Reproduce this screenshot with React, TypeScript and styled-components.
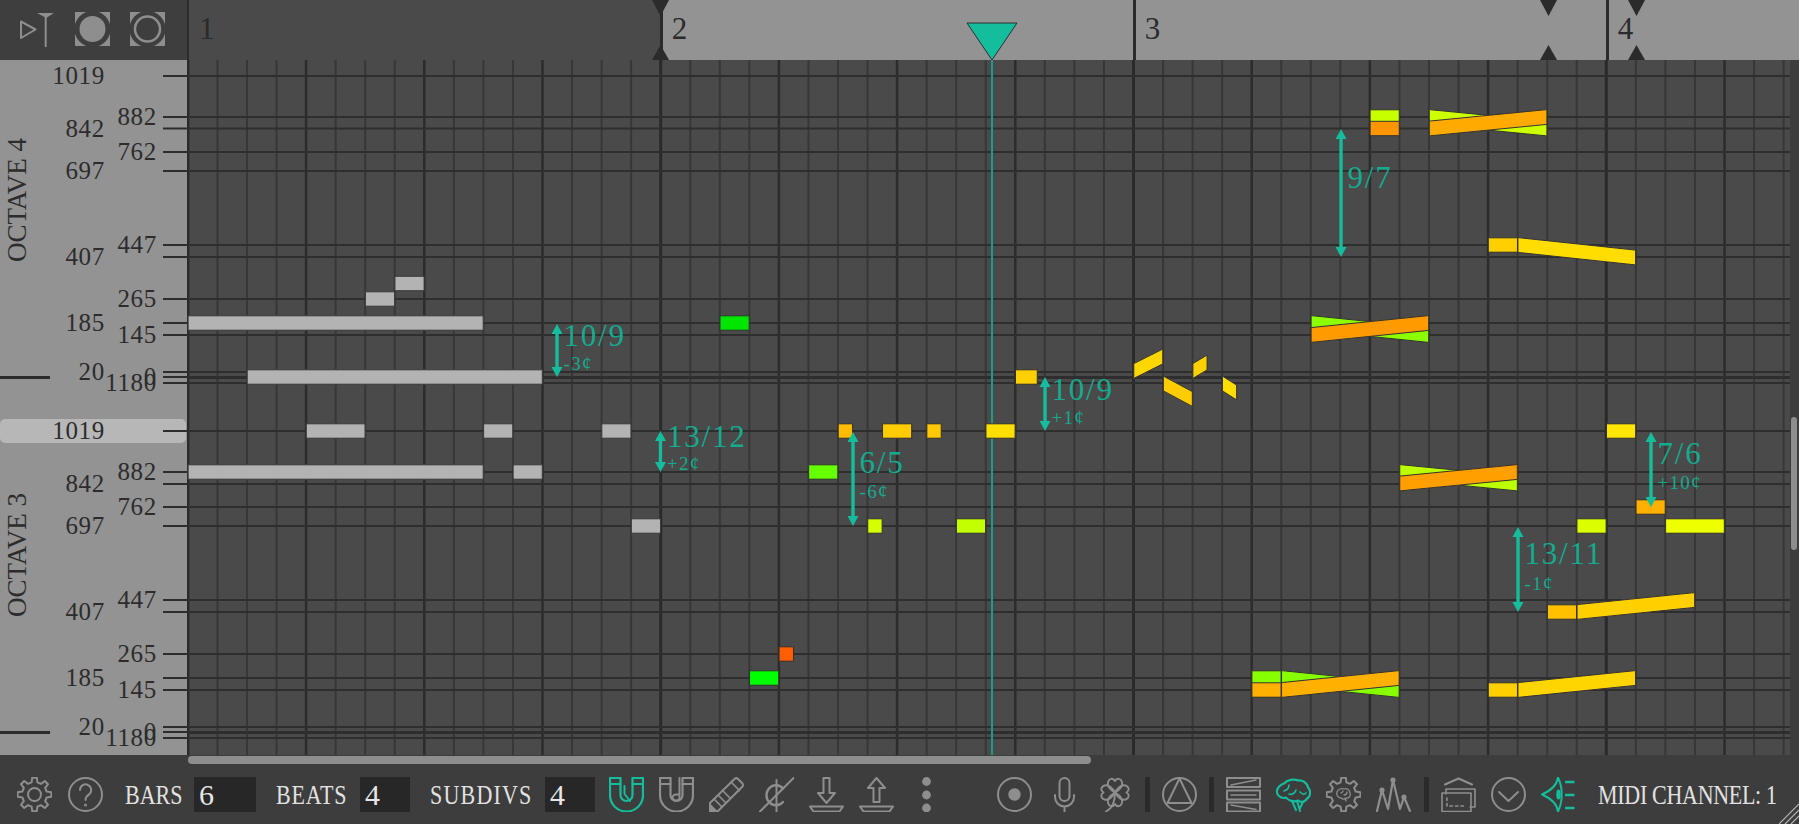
import React from "react";
import styled, { createGlobalStyle } from "styled-components";

const SERIF = `"Liberation Serif", "DejaVu Serif", serif`;
const GRAY = "#8e8e8e";
const TEAL = "#14bd9b";
const TEALTEXT = "#15ab8f";

const Global = createGlobalStyle`
  html, body { margin: 0; padding: 0; background: #3d3d3d; overflow: hidden; }
  * { box-sizing: border-box; }
`;

const Root = styled.div`
  width: 1799px;
  height: 824px;
  display: grid;
  grid-template-columns: 187px 1603px 9px;
  grid-template-rows: 60px 695px 69px;
  background: #3d3d3d;
  font-family: ${SERIF};
  overflow: hidden;
  position: relative;
`;

const Corner = styled.div`
  background: #3e3e3e;
  display: flex;
  align-items: flex-start;
  padding: 12px 0 0 20px;
  gap: 3px;
`;
const CornerGlyph = styled.svg<{ $ml?: number }>`
  width: ${(p) => (p.$ml ? 35 : 34)}px;
  height: 35px;
  margin-left: ${(p) => p.$ml ?? 0}px;
  flex: none;
`;

const Ruler = styled.div`
  position: relative;
  display: flex;
  background: #939393;
`;
const BarCell = styled.div<{ $dim?: boolean; $first?: boolean }>`
  flex: ${(p) => (p.$first ? "0 0 472.7px" : "0 0 473px")};
  height: 60px;
  background: ${(p) => (p.$dim ? "#4a4a4a" : "#939393")};
  border-left: ${(p) => (p.$first ? 2 : 3)}px solid #2b2b2b;
  padding: 14px 0 0 ${(p) => (p.$first ? 10 : 9)}px;
  color: #2b2b2b;
  font-size: 31px;
  line-height: 30px;
`;
const Marker = styled.svg`
  position: absolute;
  width: 17px;
  height: 60px;
  top: 0;
`;
const PlayHead = styled.svg`
  position: absolute;
  left: 779px;
  top: 22px;
  width: 52px;
  height: 39px;
`;

const ScrollColumn = styled.div`
  grid-column: 3;
  grid-row: 1 / 3;
  background: #3d3d3d;
  padding: 417px 2px 0 1px;
`;
const VThumb = styled.div`
  width: 6px;
  height: 133px;
  border-radius: 3px;
  background: #8e8e8e;
`;

const Side = styled.div`
  position: relative;
  background: #939393;
  overflow: hidden;
`;
const SideTicks = styled.svg`
  position: absolute;
  inset: 0;
  width: 187px;
  height: 695px;
`;
const HighlightRow = styled.div`
  position: absolute;
  left: 0;
  right: 1px;
  top: 359px;
  height: 24px;
  background: #b7b7b7;
  border-radius: 5px;
`;
const PitchLabel = styled.div.attrs<{ $y: number; $col: number }>((p) => ({
  style: { top: p.$y - 61 },
}))<{ $y: number; $col: number }>`
  position: absolute;
  right: ${(p) => (p.$col === 0 ? 82 : 30)}px;
  transform: translateY(-50%);
  font-size: 25px;
  letter-spacing: 0.7px;
  line-height: 25px;
  color: #2c2c2c;
`;
const OctaveLabel = styled.div.attrs<{ $y: number }>((p) => ({
  style: { top: p.$y - 60 },
}))<{ $y: number }>`
  position: absolute;
  left: 4px;
  writing-mode: vertical-rl;
  transform: rotate(180deg) translateY(50%);
  font-size: 27px;
  line-height: 27px;
  color: #2c2c2c;
  white-space: nowrap;
`;

const Roll = styled.div`
  position: relative;
  background: #4a4a4a;
  overflow: hidden;
`;
const RollCanvas = styled.svg`
  position: absolute;
  inset: 0;
  width: 1603px;
  height: 695px;
`;
const Ratio = styled.div.attrs<{ $x: number; $y: number; $small?: boolean }>((p) => ({
  style: { left: p.$x - 187, top: p.$y - 60 },
}))<{ $x: number; $y: number; $small?: boolean }>`
  position: absolute;
  transform: translateY(-50%);
  color: ${TEALTEXT};
  font-size: ${(p) => (p.$small ? 19 : 31)}px;
  letter-spacing: ${(p) => (p.$small ? 1.3 : 1.8)}px;
  line-height: 1;
  white-space: nowrap;
`;

const Bottom = styled.div`
  grid-column: 1 / 4;
  position: relative;
  background: #3d3d3d;
  display: flex;
  flex-direction: column;
`;
const HTrack = styled.div`
  height: 22px;
  padding: 1px 0 0 188px;
`;
const HThumb = styled.div`
  width: 903px;
  height: 8px;
  border-radius: 4px;
  background: #8e8e8e;
`;
const Toolbar = styled.div`
  display: flex;
  align-items: center;
  height: 35px;
  padding-left: 17px;
`;
const Glyph = styled.svg<{ $ml?: number; $w?: number; $on?: boolean }>`
  flex: none;
  width: ${(p) => p.$w ?? 35}px;
  height: 35px;
  margin-left: ${(p) => p.$ml ?? 0}px;
  color: ${(p) => (p.$on ? TEAL : GRAY)};
  fill: none;
  stroke: currentColor;
  stroke-width: 2;
  stroke-linejoin: round;
  stroke-linecap: round;
`;
const Sep = styled.div<{ $ml: number }>`
  flex: none;
  width: 5px;
  height: 35px;
  margin-left: ${(p) => p.$ml}px;
  background: #2a2a2a;
`;
const FieldLabel = styled.span<{ $w: number; $ml: number; $sp?: number }>`
  flex: none;
  display: inline-block;
  width: ${(p) => p.$w}px;
  margin-left: ${(p) => p.$ml}px;
  color: #e2e2e2;
  font-size: 22px;
  line-height: 35px;
  letter-spacing: ${(p) => p.$sp ?? 0}px;
  white-space: nowrap;
  transform: scaleY(1.28);
`;
const FieldInput = styled.input<{ $w: number; $pl?: number }>`
  flex: none;
  width: ${(p) => p.$w}px;
  height: 35px;
  margin-left: 12px;
  padding: 0 0 0 ${(p) => p.$pl ?? 5}px;
  border: 0;
  outline: 0;
  background: #272727;
  color: #e6e6e6;
  font-family: ${SERIF};
  font-size: 30px;
`;
const Hatch = styled.svg`
  position: absolute;
  right: 0;
  bottom: 0;
  width: 20px;
  height: 21px;
`;

const sub = 29.55;
const x0 = 187.9;
const X = (i: number) => x0 + sub * i;

const octave = [
  { c: 1019, y: 76, col: 0 },
  { c: 882, y: 117, col: 1 },
  { c: 842, y: 128.5, col: 0 },
  { c: 762, y: 152, col: 1 },
  { c: 697, y: 171, col: 0 },
  { c: 447, y: 245, col: 1 },
  { c: 407, y: 257, col: 0 },
  { c: 265, y: 299, col: 1 },
  { c: 185, y: 323, col: 0 },
  { c: 145, y: 335, col: 1 },
  { c: 20, y: 372, col: 0 },
  { c: 0, y: 377, col: 1 },
  { c: 1180, y: 383, col: 1 },
];
const rows = [...octave, ...octave.map((o) => ({ ...o, y: Math.round(o.y + 355) }))];

const GRAYNOTE = "#b3b3b3";
type N = [number, number, number, string];
const notes: N[] = [
  [0, 10, 472, GRAYNOTE],
  [11, 1, 472, GRAYNOTE],
  [4, 2, 431, GRAYNOTE],
  [10, 1, 431, GRAYNOTE],
  [14, 1, 431, GRAYNOTE],
  [15, 1, 526, GRAYNOTE],
  [2, 10, 377, GRAYNOTE],
  [0, 10, 323, GRAYNOTE],
  [6, 1, 299, GRAYNOTE],
  [7, 1, 283.5, GRAYNOTE],
  [18, 1, 323, "#00e600"],
  [22, 0.5, 431, "#ffbb00"],
  [23.5, 1, 431, "#ffcc00"],
  [25, 0.5, 431, "#ffc800"],
  [27, 1, 431, "#ffdf00"],
  [21, 1, 472, "#66ff00"],
  [23, 0.5, 526, "#d4ff00"],
  [26, 1, 526, "#c4ff00"],
  [20, 0.5, 654, "#ff5f00"],
  [19, 1, 678, "#00ff00"],
  [40, 1, 117, "#c8ff00"],
  [40, 1, 128.5, "#ff9500"],
  [44, 1, 245, "#ffd000"],
  [48, 1, 431, "#ffe600"],
  [49, 1, 507, "#ffb000"],
  [47, 1, 526, "#dcff00"],
  [50, 2, 526, "#eeff00"],
  [46, 1, 612, "#ffc000"],
  [44, 1, 690, "#ffd000"],
  [36, 1, 678, "#88ff00"],
  [36, 1, 690, "#ffb000"],
  [28, 0.75, 377, "#ffcf00"],
];

type S = [number, number, number, number, string];
const slides: S[] = [
  [42, 46, 117, 128.5, "#ccff00"],
  [42, 46, 128.5, 117, "#ffaa00"],
  [45, 49, 245, 257.5, "#ffdd00"],
  [38, 42, 323, 335, "#8cff00"],
  [38, 42, 335, 323, "#ff9a00"],
  [32, 33, 371, 356.5, "#ffd700"],
  [33, 34, 383.5, 399, "#ffcc00"],
  [34, 34.5, 371, 362.5, "#ffd000"],
  [35, 35.5, 383.5, 392.5, "#ffdd00"],
  [37, 41, 678, 690, "#88ff00"],
  [37, 41, 690, 678, "#ffb000"],
  [41, 45, 472, 483.5, "#bbff00"],
  [41, 45, 483.5, 472, "#ff9f00"],
  [47, 51, 612, 600, "#ffd000"],
  [45, 49, 690, 678, "#ffd500"],
];

type A = { x: number; y1: number; y2: number; big: string; by: number; small?: string; sy?: number };
const arrows: A[] = [
  { x: 557, y1: 324, y2: 377, big: "10/9", by: 335, small: "-3¢", sy: 363 },
  { x: 660.5, y1: 431, y2: 472, big: "13/12", by: 436, small: "+2¢", sy: 463 },
  { x: 853, y1: 432, y2: 526, big: "6/5", by: 462, small: "-6¢", sy: 491 },
  { x: 1045, y1: 377, y2: 431, big: "10/9", by: 389, small: "+1¢", sy: 417 },
  { x: 1341, y1: 129, y2: 257, big: "9/7", by: 177 },
  { x: 1651, y1: 432, y2: 507, big: "7/6", by: 453, small: "+10¢", sy: 482 },
  { x: 1518, y1: 527, y2: 612, big: "13/11", by: 553, small: "-1¢", sy: 583 },
];

function gearPath(cx: number, cy: number, ro: number, ri: number, teeth: number) {
  const pts: string[] = [];
  const step = (Math.PI * 2) / teeth;
  for (let t = 0; t < teeth; t++) {
    const a = t * step - Math.PI / 2;
    const w1 = step * 0.17;
    const w2 = step * 0.3;
    const p = (r: number, an: number) => `${(cx + r * Math.cos(an)).toFixed(2)} ${(cy + r * Math.sin(an)).toFixed(2)}`;
    pts.push(p(ri, a - w2), p(ro, a - w1), p(ro, a + w1), p(ri, a + w2));
  }
  return "M" + pts.join("L") + "Z";
}

const LEAF = "M0 0 C-5 -3,-8 -7,-7 -10.5 C-6 -14,-2 -15,0 -11.5 C2 -15,6 -14,7 -10.5 C8 -7,5 -3,0 0 Z";

const App = () => {
  const verticals: number[] = [];
  for (let i = 0; i <= 54; i++) verticals.push(i);
  return (
    <Root>
      <Global />
      <Corner>
        <CornerGlyph viewBox="0 0 34 35">
          <path d="M1 9.5 L15.5 17.5 L1 26 Z" fill="none" stroke={GRAY} strokeWidth="2" strokeLinejoin="round" />
          <path d="M17 1 H34 L26.2 6 Z" fill={GRAY} />
          <line x1="25.7" y1="2" x2="25.7" y2="35" stroke={GRAY} strokeWidth="2" />
        </CornerGlyph>
        <CornerGlyph $ml={18} viewBox="0 0 35 35">
          <rect x="0" y="0" width="35" height="34" fill={GRAY} />
          <circle cx="17.5" cy="17" r="18" fill="#3e3e3e" />
          <circle cx="17.5" cy="17" r="13" fill={GRAY} />
        </CornerGlyph>
        <CornerGlyph $ml={17} viewBox="0 0 35 35">
          <rect x="0" y="0" width="35" height="34" fill={GRAY} />
          <circle cx="17.5" cy="17" r="18" fill="#3e3e3e" />
          <circle cx="17.5" cy="17" r="12.5" fill="none" stroke={GRAY} strokeWidth="2.5" />
        </CornerGlyph>
      </Corner>

      <Ruler>
        <BarCell $dim $first>1</BarCell>
        <BarCell>2</BarCell>
        <BarCell>3</BarCell>
        <BarCell>4</BarCell>
        {[473.5, 1361.2, 1449.5].map((l) => (
          <Marker key={l} viewBox="0 0 17 60" style={{ left: l - 8.5 }}>
            <path d="M0 0 H17 L8.5 16 Z" fill="#2b2b2b" />
            <path d="M0 60 H17 L8.5 45 Z" fill="#2b2b2b" />
          </Marker>
        ))}
        <PlayHead viewBox="0 0 52 39">
          <path d="M1 1 H51 L26 38 Z" fill={TEAL} stroke="#2f2f2f" strokeWidth="1" strokeLinejoin="round" />
        </PlayHead>
      </Ruler>

      <ScrollColumn>
        <VThumb />
      </ScrollColumn>

      <Side>
        <HighlightRow />
        <SideTicks viewBox="0 60 187 695">
          {rows.map((r, i) => (
            <line key={i} x1={163} x2={187} y1={r.y} y2={r.y} stroke="#2c2c2c" strokeWidth="2" />
          ))}
          <line x1={0} x2={50} y1={377.5} y2={377.5} stroke="#2c2c2c" strokeWidth="3" />
          <line x1={0} x2={50} y1={732.5} y2={732.5} stroke="#2c2c2c" strokeWidth="3" />
        </SideTicks>
        {rows.map((r, i) => (
          <PitchLabel key={i} $y={r.y} $col={r.col}>{r.c}</PitchLabel>
        ))}
        <OctaveLabel $y={200}>OCTAVE 4</OctaveLabel>
        <OctaveLabel $y={555}>OCTAVE 3</OctaveLabel>
      </Side>

      <Roll>
        <RollCanvas viewBox="187 60 1603 695">
          {verticals.map((i) => (
            <line
              key={i}
              x1={X(i)}
              x2={X(i)}
              y1={60}
              y2={755}
              stroke={i % 16 === 0 ? "#2a2a2a" : i % 4 === 0 ? "#2c2c2c" : "#373737"}
              strokeWidth={i % 16 === 0 ? 3 : i % 4 === 0 ? 2.5 : 2}
            />
          ))}
          {rows.map((r, i) => (
            <line
              key={i}
              x1={187}
              x2={1790}
              y1={r.c === 0 ? r.y + 0.5 : r.y}
              y2={r.c === 0 ? r.y + 0.5 : r.y}
              stroke="#2e2e2e"
              strokeWidth={r.c === 0 ? 3 : 2}
            />
          ))}
          <line x1={992} x2={992} y1={60} y2={755} stroke="#1a9c85" strokeWidth="2" />
          {notes.map(([i, span, y, color], k) => (
            <rect
              key={k}
              x={X(i) + 0.2}
              y={y - 7.2}
              width={sub * span - 0.4}
              height={14.4}
              fill={color}
              stroke={color === GRAYNOTE ? "#3a3a3a" : "#333"}
              strokeWidth="1"
            />
          ))}
          {slides.map(([a, b, y1, y2, color], k) => (
            <polygon
              key={k}
              points={`${X(a) + 0.3},${y1 - 7.4} ${X(b) - 0.3},${y2 - 7.4} ${X(b) - 0.3},${y2 + 7.4} ${X(a) + 0.3},${y1 + 7.4}`}
              fill={color}
              stroke="#333"
              strokeWidth="1"
              strokeLinejoin="round"
            />
          ))}
          {arrows.map((a, k) => (
            <g key={k} fill={TEAL}>
              <rect x={a.x - 1.7} y={a.y1 + 5} width="3.4" height={a.y2 - a.y1 - 10} />
              <path d={`M${a.x} ${a.y1} l5.5 10 h-11 Z`} />
              <path d={`M${a.x} ${a.y2} l5.5 -10 h-11 Z`} />
            </g>
          ))}
        </RollCanvas>
        {arrows.map((a, k) => (
          <React.Fragment key={k}>
            <Ratio $x={a.x + 6.5} $y={a.by}>{a.big}</Ratio>
            {a.small && <Ratio $small $x={a.x + 6.5} $y={a.sy as number}>{a.small}</Ratio>}
          </React.Fragment>
        ))}
      </Roll>

      <Bottom>
        <HTrack>
          <HThumb />
        </HTrack>
        <Toolbar>
          <Glyph viewBox="0 0 35 35">
            <path d={gearPath(17.5, 17.5, 17, 12.5, 8)} />
            <circle cx="17.5" cy="17.5" r="6.5" />
          </Glyph>
          <Glyph $ml={16} viewBox="0 0 35 35">
            <circle cx="17.5" cy="17.5" r="16.5" />
            <path d="M12 13a5.6 5.6 0 1 1 8.8 4.6c-2 1.4-3.3 2.6-3.3 5.4" />
            <circle cx="17.5" cy="28" r="0.6" />
          </Glyph>
          <FieldLabel $w={57} $ml={22}>BARS</FieldLabel>
          <FieldInput $w={62} readOnly value="6" />
          <FieldLabel $w={72} $ml={20} $sp={0.8}>BEATS</FieldLabel>
          <FieldInput $w={50} readOnly value="4" />
          <FieldLabel $w={103} $ml={20} $sp={1.2}>SUBDIVS</FieldLabel>
          <FieldInput $w={50} readOnly value="4" />

          <Glyph $ml={14} $on viewBox="0 0 35 35">
            <path d="M1 1 V18 A16.5 16.5 0 0 0 34 18 V1 H23.5 V18 A6 6 0 0 1 11.5 18 V1 Z" strokeWidth="2.2" />
            <path d="M1 7 H11.5 M23.5 7 H34" />
            <path d="M15.5 9 V17 L21 24" />
          </Glyph>
          <Glyph $ml={15} viewBox="0 0 35 35">
            <path d="M1 1 V18 A16.5 16.5 0 0 0 34 18 V1 H23.5 V18 A6 6 0 0 1 11.5 18 V1 Z" strokeWidth="2.2" />
            <path d="M1 7 H11.5 M23.5 7 H34" />
            <path d="M20.5 1 V20 A3.5 3 0 1 1 17 17.5 H20.5" />
          </Glyph>
          <Glyph $ml={15} viewBox="0 0 35 35">
            <path d="M1 34 V26 L26 1.5 Q27.5 0.5 29 2 L33.5 6.5 Q34.5 8 33.5 9.5 L9 34 Z" />
            <path d="M22 5 L30.5 13.5 M5 22 L13 30 M9 18 L17 26 M13.5 13.5 L21.5 21.5" strokeWidth="1.7" />
            <path d="M1 28 L7 34 H1 Z" fill="currentColor" />
          </Glyph>
          <Glyph $ml={15} viewBox="0 0 35 35">
            <path d="M24 11.5 A9.5 10 0 1 0 24 25" strokeWidth="2.4" />
            <path d="M17.5 3 V35" strokeWidth="2" />
            <path d="M1 34.5 L34.5 1" strokeWidth="2" />
          </Glyph>
          <Glyph $ml={15} viewBox="0 0 35 35">
            <path d="M14.5 1 H20.5 V16 H26 L17.5 26 L9 16 H14.5 Z" />
            <path d="M1 29.5 H34 L30.5 34.5 H4.5 Z" />
          </Glyph>
          <Glyph $ml={15} viewBox="0 0 35 35">
            <path d="M14.5 25 H20.5 V11 H26 L17.5 1 L9 11 H14.5 Z" />
            <path d="M1 29.5 H34 L30.5 34.5 H4.5 Z" />
          </Glyph>
          <Glyph $ml={28} $w={9} viewBox="0 0 9 35">
            <g fill="currentColor" stroke="none">
              <circle cx="4.5" cy="4.5" r="4.4" />
              <circle cx="4.5" cy="18" r="4.4" />
              <circle cx="4.5" cy="31" r="4.4" />
            </g>
          </Glyph>
          <Glyph $ml={66} viewBox="0 0 35 35">
            <circle cx="17.5" cy="17.5" r="16.5" />
            <circle cx="17.5" cy="17.5" r="6.2" fill="currentColor" stroke="none" />
          </Glyph>
          <Glyph $ml={22} $w={21} viewBox="0 0 21 35">
            <rect x="5.5" y="1" width="10" height="23" rx="5" />
            <path d="M1 18 V20 A9.5 9.5 0 0 0 20 20 V18 M10.5 29.5 V35" />
          </Glyph>
          <Glyph $ml={25} $w={30} viewBox="0 0 30 35">
            <g transform="translate(15 15.5)">
              {[0, 90, 180, 270].map((a) => (
                <path key={a} d={LEAF} transform={`rotate(${a})`} strokeWidth="1.9" />
              ))}
            </g>
            <path d="M15 16 C15 25, 13 31, 6 34.5" strokeWidth="1.9" />
          </Glyph>
          <Sep $ml={15} />
          <Glyph $ml={12} viewBox="0 0 35 35">
            <circle cx="17.5" cy="17.5" r="16.5" />
            <path d="M17.5 1.5 L29.5 26 H5.5 Z" />
          </Glyph>
          <Sep $ml={12} />
          <Glyph $ml={12} viewBox="0 0 35 35">
            <rect x="1" y="1" width="33" height="9" />
            <path d="M5 8 L30 3" strokeWidth="1.4" />
            <rect x="1" y="13.5" width="33" height="9" />
            <path d="M5 18 H30" strokeWidth="1.4" />
            <rect x="1" y="25.5" width="33" height="9" />
            <path d="M5 28 L30 32.5" strokeWidth="1.4" />
          </Glyph>
          <Glyph $ml={15} $on viewBox="0 0 35 35">
            <path d="M8 6.5 C11 3, 18 1.5, 22 3.5 C26 2.5, 31 5.5, 32 10.5 C35 13.5, 35 19.5, 31 21.5 C29 25.5, 24 25.5, 22 23.5 C18 25.5, 12 23.5, 10 20.5 C5 22.5, 0 17.5, 1 13.5 C2 9.5, 5 7.5, 8 6.5 Z" strokeWidth="2.2" />
            <path d="M16 24 L20 33 M21 24 L24 34 M27 25 L24 31" />
            <path d="M8 14 C11 13, 13 11, 13 8 M13 17 C16 18, 19 16, 20 13 M24 15 C26 17, 28 18, 30 16" strokeWidth="1.7" />
          </Glyph>
          <Glyph $ml={15} viewBox="0 0 35 35">
            <path d={gearPath(17.5, 17.5, 17, 12.5, 8)} />
            <path d="M11 15 C12 12, 16 11, 18 12 C21 11, 24 13, 24 16 C25 19, 23 21, 21 21 C19 23, 16 22, 15 21 C12 21, 10 18, 11 15 Z M15 16 C16 15, 17 15, 17 14 M18 18 C20 18, 21 17, 21 15 M19 21 L20 24" strokeWidth="1.3" />
          </Glyph>
          <Glyph $ml={15} viewBox="0 0 35 35">
            <path d="M1 34 L6 13 L12 32 L17 3 L24 32 L28 20 L34 34" strokeWidth="2.2" />
            <circle cx="6" cy="13" r="1.6" fill="currentColor" />
            <circle cx="17" cy="3" r="1.6" fill="currentColor" />
            <circle cx="28" cy="20" r="1.6" fill="currentColor" />
          </Glyph>
          <Sep $ml={13} />
          <Glyph $ml={12} viewBox="0 0 35 35">
            <path d="M4 7.5 L17.5 1.5 L31 7.5" />
            <path d="M5 17 V12 H34 V30 H29" strokeWidth="1.6" />
            <rect x="1" y="16" width="29" height="18.5" strokeWidth="1.6" />
            <path d="M6 21 V29 H25" strokeWidth="1.6" strokeDasharray="2.5 3" />
          </Glyph>
          <Glyph $ml={15} viewBox="0 0 35 35">
            <circle cx="17.5" cy="17.5" r="16.5" />
            <path d="M8 15 L17.5 24 L27 15" />
          </Glyph>
          <Glyph $ml={15} $on viewBox="0 0 35 35">
            <path d="M17 0.5 C16 8, 9 14, 1 17.5 C9 21, 16 27, 17 34.5 C20 28, 21 23, 20.5 17.5 C21 12, 20 7, 17 0.5 Z" />
            <ellipse cx="17.5" cy="17.5" rx="2.2" ry="5" fill="currentColor" stroke="none" />
            <path d="M24 5 H33.5 M24 18 H33.5 M24 31 H33.5" strokeWidth="2.6" strokeLinecap="butt" />
          </Glyph>
          <FieldLabel $w={185} $ml={22} $sp={-0.3}>MIDI CHANNEL: 1</FieldLabel>
        </Toolbar>
        <Hatch viewBox="0 0 20 21">
          <path d="M0 21 L20 1 M6 21 L20 7 M12 21 L20 13" stroke="#b5b5b5" strokeWidth="1.2" fill="none" />
        </Hatch>
      </Bottom>
    </Root>
  );
};

export default App;
